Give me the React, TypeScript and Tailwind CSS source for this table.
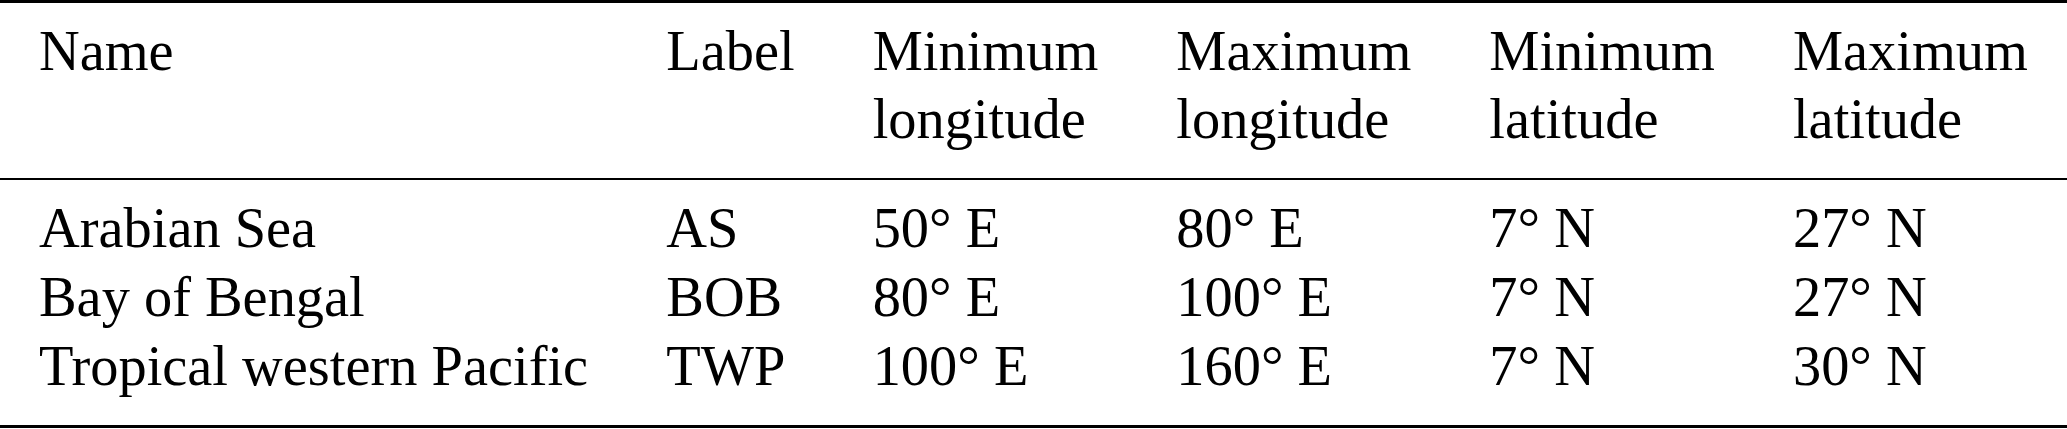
import React from "react";

const headers = [
  ["Name"],
  ["Label"],
  ["Minimum", "longitude"],
  ["Maximum", "longitude"],
  ["Minimum", "latitude"],
  ["Maximum", "latitude"],
];

const rows = [
  ["Arabian Sea", "AS", "50° E", "80° E", "7° N", "27° N"],
  ["Bay of Bengal", "BOB", "80° E", "100° E", "7° N", "27° N"],
  ["Tropical western Pacific", "TWP", "100° E", "160° E", "7° N", "30° N"],
];

export default function App() {
  return (
    <div className="w-[2067px] h-[429px] bg-white text-black overflow-hidden">
      <table
        className="w-full border-collapse border-t-[3px] border-b-[3px] border-black text-[56.4px]"
        style={{ fontFamily: '"Liberation Serif", "Times New Roman", serif' }}
      >
        <thead>
          <tr className="border-b-2 border-black">
            {headers.map((lines, i) => (
              <th
                key={i}
                className="px-[39px] pt-[15px] pb-[25px] text-left align-top font-normal leading-[1.2] whitespace-nowrap"
              >
                {lines.map((line) => (
                  <div key={line}>{line}</div>
                ))}
              </th>
            ))}
          </tr>
        </thead>
        <tbody>
          {rows.map((row, r) => (
            <tr key={r}>
              {row.map((cell, c) => (
                <td
                  key={c}
                  className={
                    "px-[39px] text-left align-top leading-[69px] whitespace-nowrap " +
                    (r === 0 ? "pt-[14px] " : "") +
                    (r === rows.length - 1 ? "pb-[24px]" : "")
                  }
                >
                  {cell}
                </td>
              ))}
            </tr>
          ))}
        </tbody>
      </table>
    </div>
  );
}
